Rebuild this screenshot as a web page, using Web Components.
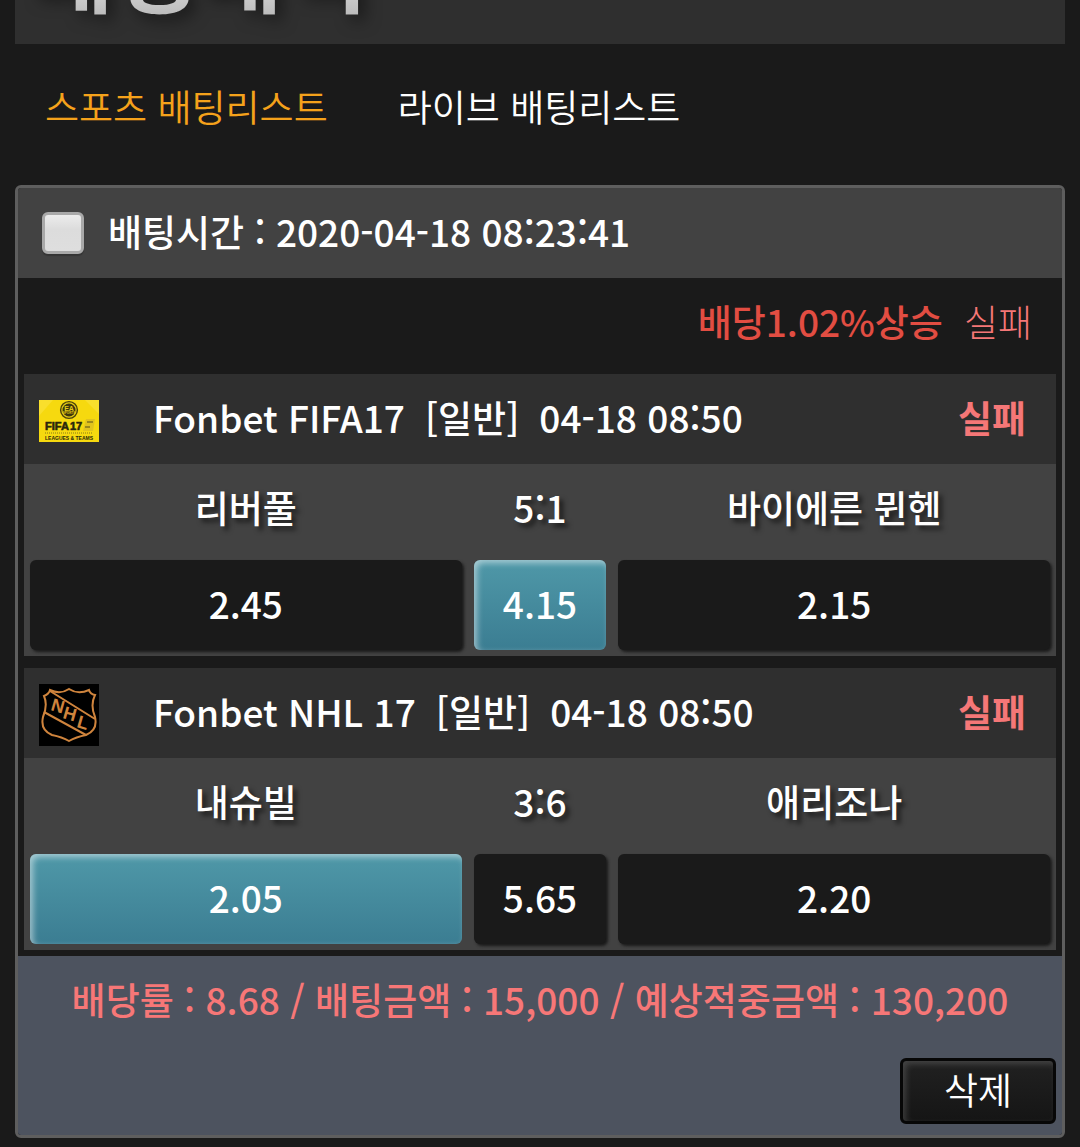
<!DOCTYPE html>
<html lang="ko">
<head>
<meta charset="utf-8">
<meta name="viewport" content="width=device-width, initial-scale=1">
<title>배팅내역</title>
<style>
  body {
    margin: 0;
    background: #1a1a1a;
    color: #fff;
    font-family: "Noto Sans CJK KR", sans-serif;
    font-size: 37px;
    line-height: 48px;
  }
</style>
</head>
<body>
<bet-page>
  <page-title slot="title">배팅내역</page-title>
  <bet-tabs slot="tabs">
    <bet-tab href="#sports" active>스포츠 배팅리스트</bet-tab>
    <bet-tab href="#live">라이브 배팅리스트</bet-tab>
  </bet-tabs>
  <bet-slip time="2020-04-18 08:23:41">
    <span slot="bonus">배당1.02%상승</span>
    <span slot="result">실패</span>
    <bet-match league="Fonbet FIFA17" type="[일반]" date="04-18 08:50" status="실패" home="리버풀" score="5:1" away="바이에른 뮌헨">
      <fifa-logo slot="logo"></fifa-logo>
      <odds-button>2.45</odds-button>
      <odds-button selected>4.15</odds-button>
      <odds-button>2.15</odds-button>
    </bet-match>
    <bet-match league="Fonbet NHL 17" type="[일반]" date="04-18 08:50" status="실패" home="내슈빌" score="3:6" away="애리조나">
      <nhl-logo slot="logo"></nhl-logo>
      <odds-button selected>2.05</odds-button>
      <odds-button>5.65</odds-button>
      <odds-button>2.20</odds-button>
    </bet-match>
    <span slot="total">배당률 : 8.68 / 배팅금액 : 15,000 / 예상적중금액 : 130,200</span>
    <delete-button slot="action">삭제</delete-button>
  </bet-slip>
</bet-page>

<script>
class BetPage extends HTMLElement {
  constructor() {
    super();
    this.attachShadow({mode: 'open'}).innerHTML = `
      <style>
        :host {
          display: block;
          padding: 0 15px 9px;
        }
      </style>
      <slot name="title"></slot>
      <slot name="tabs"></slot>
      <slot></slot>
    `;
  }
}

class PageTitle extends HTMLElement {
  constructor() {
    super();
    this.attachShadow({mode: 'open'}).innerHTML = `
      <style>
        :host {
          display: flex;
          align-items: flex-end;
          height: 44px;
          overflow: hidden;
          background: #2f2f2f;
        }
        h1 {
          margin: 0;
          padding: 0 14px 18px;
          font-size: 92px;
          line-height: 120px;
          font-weight: bold;
          color: transparent;
          background: linear-gradient(#fff 20%, #bbb 80%);
          -webkit-background-clip: text;
          background-clip: text;
          filter: drop-shadow(6px 6px 8px rgba(0, 0, 0, 0.5));
        }
      </style>
      <h1><slot></slot></h1>
    `;
  }
}

class BetTabs extends HTMLElement {
  constructor() {
    super();
    this.attachShadow({mode: 'open'}).innerHTML = `
      <style>
        :host {
          display: block;
        }
        nav {
          display: flex;
          gap: 70px;
          padding: 38px 30px 55px;
        }
      </style>
      <nav><slot></slot></nav>
    `;
  }
}

class BetTab extends HTMLElement {
  connectedCallback() {
    this.attachShadow({mode: 'open'}).innerHTML = `
      <style>
        :host {
          display: block;
        }
        a {
          color: #fff;
          font-weight: 350;
          text-decoration: none;
          white-space: nowrap;
        }
        :host([active]) a {
          color: #f5a21b;
        }
      </style>
      <a href="${this.getAttribute('href')}"><slot></slot></a>
    `;
  }
}

class BetSlip extends HTMLElement {
  connectedCallback() {
    this.attachShadow({mode: 'open'}).innerHTML = `
      <style>
        :host {
          display: block;
          border: 3px solid #5e5e5e;
          border-radius: 6px;
          overflow: hidden;
          font-weight: 500;
        }
        label {
          display: flex;
          align-items: center;
          gap: 24px;
          height: 90px;
          padding: 0 24px;
          background: #424242;
        }
        label span {
          padding-bottom: 4px;
        }
        input {
          appearance: none;
          width: 42px;
          height: 42px;
          margin: 0;
          border: 3px solid #a9a9a9;
          border-radius: 6px;
          background: linear-gradient(#ececec, #dcdcdc 40%, #dedede);
          box-shadow: 0 2px 1px rgba(0, 0, 0, 0.2);
        }
        .result {
          display: flex;
          justify-content: flex-end;
          align-items: center;
          gap: 21px;
          height: 96px;
          padding: 0 30px 10px;
          box-sizing: border-box;
        }
        .bonus {
          color: #e24d42;
        }
        .outcome {
          color: #f57777;
          font-weight: 300;
        }
        .matches {
          display: grid;
          gap: 12px;
          padding: 0 6px 6px;
        }
        footer {
          padding: 0 6px 11px;
          background: #4d535f;
        }
        .total {
          margin: 0;
          line-height: 86px;
          text-align: center;
          color: #f77777;
        }
        .actions {
          display: flex;
          justify-content: flex-end;
          padding-top: 16px;
        }
      </style>
      <label><input type="checkbox"><span>배팅시간 : ${this.getAttribute('time')}</span></label>
      <div class="result">
        <span class="bonus"><slot name="bonus"></slot></span>
        <span class="outcome"><slot name="result"></slot></span>
      </div>
      <div class="matches"><slot></slot></div>
      <footer>
        <p class="total"><slot name="total"></slot></p>
        <div class="actions"><slot name="action"></slot></div>
      </footer>
    `;
  }
}

class BetMatch extends HTMLElement {
  connectedCallback() {
    const get = name => this.getAttribute(name);
    this.attachShadow({mode: 'open'}).innerHTML = `
      <style>
        :host {
          display: block;
          background: #424242;
        }
        header {
          display: flex;
          align-items: center;
          height: 90px;
          padding: 0 30px 0 15px;
          background: #2f2f2f;
        }
        .logo {
          display: flex;
          align-items: center;
          width: 114px;
          height: 90px;
          padding-top: 4px;
          box-sizing: border-box;
        }
        .info {
          display: flex;
          flex: 1;
          gap: 20px;
          padding-bottom: 4px;
          white-space: nowrap;
        }
        .status {
          padding-bottom: 4px;
          color: #f57777;
          font-weight: 700;
        }
        .teams, .odds {
          display: grid;
          grid-template-columns: 13fr 4fr 13fr;
          gap: 12px;
          padding: 0 6px;
        }
        .teams {
          line-height: 86px;
          padding-bottom: 10px;
          text-align: center;
          text-shadow: 4px 4px 5px rgba(0, 0, 0, 0.6);
        }
        .odds {
          padding-bottom: 6px;
        }
      </style>
      <header>
        <div class="logo"><slot name="logo"></slot></div>
        <div class="info">
          <span>${get('league')}</span>
          <span>${get('type')}</span>
          <span>${get('date')}</span>
        </div>
        <span class="status">${get('status')}</span>
      </header>
      <div class="teams">
        <span>${get('home')}</span>
        <span>${get('score')}</span>
        <span>${get('away')}</span>
      </div>
      <div class="odds"><slot></slot></div>
    `;
  }
}

class OddsButton extends HTMLElement {
  constructor() {
    super();
    this.attachShadow({mode: 'open'}).innerHTML = `
      <style>
        :host {
          display: block;
        }
        button {
          display: block;
          width: 100%;
          height: 90px;
          padding: 0 0 4px;
          border: 0;
          border-radius: 6px;
          background: #1a1a1a;
          box-shadow: 2px 2px 3px #1a1a1a;
          color: #fff;
          font: inherit;
        }
        :host([selected]) button {
          background: linear-gradient(#4f98a8, #3b7d92);
          box-shadow: inset 3px 3px 6px rgba(255, 255, 255, 0.5);
        }
      </style>
      <button type="button"><slot></slot></button>
    `;
  }
}

class DeleteButton extends HTMLElement {
  constructor() {
    super();
    this.attachShadow({mode: 'open'}).innerHTML = `
      <style>
        :host {
          display: block;
        }
        button {
          display: block;
          width: 156px;
          height: 66px;
          padding: 0 0 4px;
          border: 3px solid #070707;
          border-radius: 6px;
          background: linear-gradient(#212121, #151515);
          box-shadow: inset 3px 3px 6px rgba(255, 255, 255, 0.16);
          color: #fff;
          font: inherit;
          font-weight: 350;
        }
      </style>
      <button type="button"><slot></slot></button>
    `;
  }
}

class FifaLogo extends HTMLElement {
  constructor() {
    super();
    this.attachShadow({mode: 'open'}).innerHTML = `
      <style>
        :host, svg {
          display: block;
        }
        text {
          font-family: "Liberation Sans", sans-serif;
          font-weight: bold;
          fill: #29270c;
        }
      </style>
      <svg width="60" height="42" viewBox="0 0 60 42">
        <rect width="60" height="42" fill="#f6d90f"/>
        <path d="M0 16L14 0H0zM60 14L46 0h14z" fill="#f9df2c"/>
        <circle cx="30" cy="10" r="8.4" fill="#e3c914" stroke="#4a430d" stroke-width="1.4"/>
        <circle cx="30" cy="10" r="6.5" fill="#3c370c"/>
        <text x="30" y="11" font-size="7" text-anchor="middle" style="fill:#e3c914">EA</text>
        <text x="30" y="14" font-size="3" text-anchor="middle" style="fill:#e3c914">SPORTS</text>
        <text x="6" y="30" font-size="11" stroke="#29270c" stroke-width="0.6">FIFA</text>
        <text x="31" y="30" font-size="11" stroke="#29270c" stroke-width="0.6">17</text>
        <path d="M47 19h9l-2 12h-10z" fill="#e1c41d"/>
        <path d="M48 22h6M46 27h5" stroke="#84751a" stroke-width="1.5"/>
        <path d="M6 33h47" stroke="#897b17" stroke-width="1" stroke-dasharray="1 1"/>
        <text x="6" y="40" font-size="5">LEAGUES &amp; TEAMS</text>
      </svg>
    `;
  }
}

class NhlLogo extends HTMLElement {
  constructor() {
    super();
    this.attachShadow({mode: 'open'}).innerHTML = `
      <style>
        :host, svg {
          display: block;
        }
      </style>
      <svg width="60" height="62" viewBox="0 0 60 62" fill="none" stroke="#cf843d" stroke-width="2">
        <rect width="60" height="62" fill="#000" stroke="none"/>
        <path d="M11 6Q21 11 30 5Q39 11 50 6Q51 10 56 11Q51 21 56 33Q59 46 47 51Q37 53 30 57Q23 53 13 51Q1 46 4 33Q9 21 5 12Q10 10 11 6Z"/>
        <path d="M11 7L56 35M5 28L47 51"/>
        <text x="11 23 37" y="26 34 43" rotate="16" font-family="Liberation Sans, sans-serif" font-size="18" font-weight="bold" fill="#cf843d" stroke="none">NHL</text>
      </svg>
    `;
  }
}

customElements.define('bet-page', BetPage);
customElements.define('page-title', PageTitle);
customElements.define('bet-tabs', BetTabs);
customElements.define('bet-tab', BetTab);
customElements.define('bet-slip', BetSlip);
customElements.define('bet-match', BetMatch);
customElements.define('odds-button', OddsButton);
customElements.define('delete-button', DeleteButton);
customElements.define('fifa-logo', FifaLogo);
customElements.define('nhl-logo', NhlLogo);
</script>
</body>
</html>
